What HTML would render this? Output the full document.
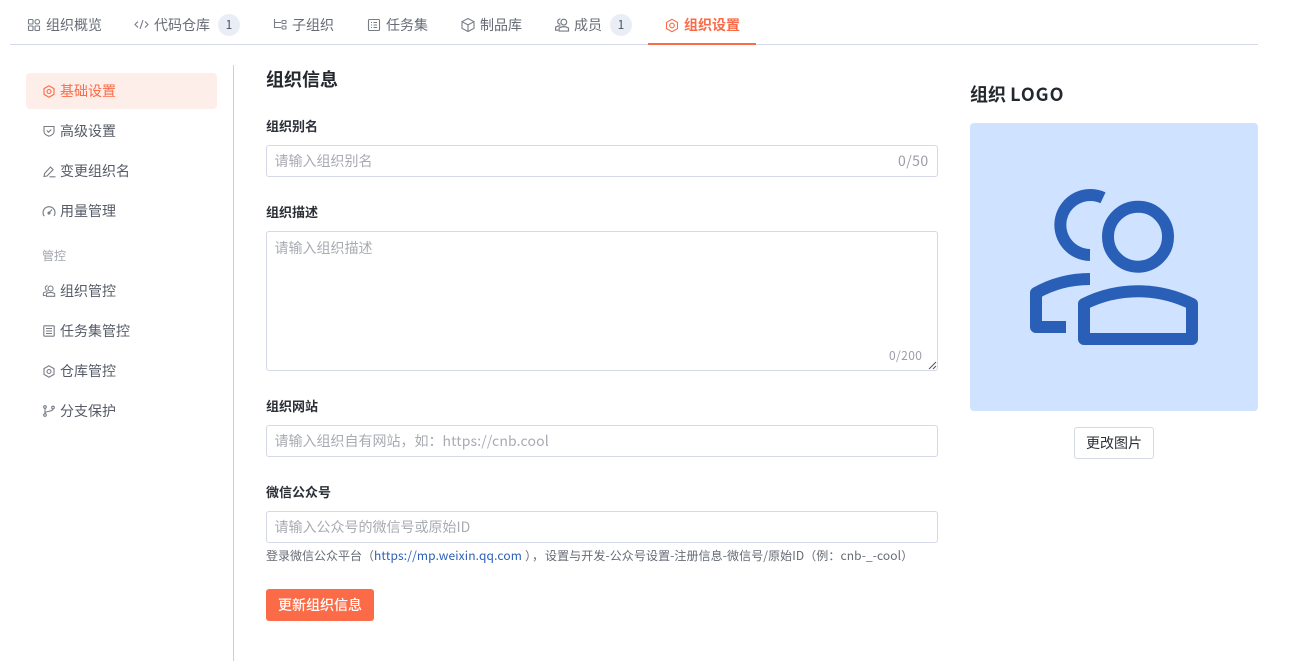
<!DOCTYPE html>
<html lang="zh-CN"><head><meta charset="utf-8"><title>组织设置</title>
<style>
html,body{margin:0;padding:0;background:#fff}
body{width:1293px;height:661px;position:relative;overflow:hidden;font-family:"Noto Sans CJK SC","Liberation Sans",sans-serif;font-size:14px;color:#555b66}
.t,.b,svg.i{position:absolute}
.t{white-space:nowrap;line-height:20px;height:20px}
.tab{color:#666b75}
.badge{position:absolute;width:22px;height:22px;border-radius:50%;background:#e9edf5;top:14px;text-align:center;line-height:22px;font-size:12px;color:#4b5563}
svg.i{fill:none;stroke:#777c85;stroke-width:1.1}
svg.o{stroke:#fb6b47}
.m{color:#555b66}
.lab{font-weight:700;font-size:13px;color:#2b2f36;left:266px}
.inp{left:266px;width:670px;border:1px solid #d5d9e6;border-radius:3px;background:#fff}
.ph{left:275px;color:#a8abb2}
</style></head><body>
<!-- tabs -->
<div class="b" style="left:10px;top:44px;width:1248px;height:1px;background:#d6dae8"></div>
<div class="b" style="left:648px;top:43px;width:108px;height:2px;background:#fb6b47"></div>

<svg class="i" style="left:27px;top:18px" width="14" height="14" viewBox="0 0 14 14"><rect x="1.5" y="1.5" width="4.5" height="4.5" rx=".7"/><rect x="8" y="1.5" width="4.5" height="4.5" rx="2.2"/><rect x="1.5" y="8" width="4.5" height="4.5" rx=".7"/><rect x="8" y="8" width="4.5" height="4.5" rx=".7"/></svg>
<span class="t tab" style="left:46px;top:15px">组织概览</span>

<svg class="i" style="left:134px;top:17px" width="15" height="15" viewBox="0 0 15 15"><path d="M4 4.5L1 7.5l3 3M11 4.5l3 3-3 3M9 3L6 12"/></svg>
<span class="t tab" style="left:154px;top:15px">代码仓库</span>
<span class="badge" style="left:218px">1</span>

<svg class="i" style="left:273px;top:17px" width="15" height="15" viewBox="0 0 15 15"><path d="M1.5 2v8.5H8M1.5 5.5H8"/><rect x="9" y="3.5" width="4" height="3" rx=".7"/><rect x="9" y="9" width="4" height="3" rx=".7"/></svg>
<span class="t tab" style="left:292px;top:15px">子组织</span>

<svg class="i" style="left:367px;top:18px" width="14" height="14" viewBox="0 0 14 14"><rect x="1.5" y="1.5" width="11" height="11" rx="1"/><path d="M4 4.5h1M6.5 4.5H10M4 7h1M6.5 7H10M4 9.5h1M6.5 9.5H10"/></svg>
<span class="t tab" style="left:386px;top:15px">任务集</span>

<svg class="i" style="left:460px;top:17px" width="16" height="16" viewBox="0 0 16 16"><path d="M8 1.5l6 3.2v6.6l-6 3.2-6-3.2V4.700zM2 4.700l6 3.200 6-3.200M8 7.900v6.600"/></svg>
<span class="t tab" style="left:480px;top:15px">制品库</span>

<svg class="i" style="left:554px;top:17px" width="16" height="16" viewBox="0 0 15 15"><path d="M6 1.800a2.500 2.500 0 0 0 0 5M6 8.200c-1.800 0-3.200.5-4.500 1.300v2.800H4"/><circle cx="9.200" cy="4.800" r="2.700"/><path d="M4.800 10.300c2.800-1.600 6-1.600 8.800 0v2.900H4.800z"/></svg>
<span class="t tab" style="left:574px;top:15px">成员</span>
<span class="badge" style="left:610px">1</span>

<svg class="i o" style="left:665px;top:18px" width="14" height="15" viewBox="0 0 14 15"><path d="M7 1.300l5.500 3.100v6.200L7 13.700l-5.500-3.100V4.400z"/><circle cx="7" cy="7.500" r="2.300"/></svg>
<span class="t" style="left:684px;top:15px;color:#fb6b47;font-weight:700">组织设置</span>

<!-- sidebar -->
<div class="b" style="left:233px;top:65px;width:1px;height:596px;background:#ccd0dc"></div>
<div class="b" style="left:26px;top:73px;width:191px;height:36px;background:#fdeee9;border-radius:4px"></div>

<svg class="i o" style="left:43px;top:85px" width="12" height="13" viewBox="0 0 12 13"><path d="M6 .8l5 2.800v5.800l-5 2.800-5-2.800V3.600z"/><circle cx="6" cy="6.500" r="2"/></svg>
<span class="t" style="left:60px;top:81px;color:#fb6b47">基础设置</span>

<svg class="i" style="left:43px;top:125px" width="12" height="12" viewBox="0 0 12 12"><path d="M1 1.500h10v5.200c0 2-2.500 3.600-5 4.500-2.500-.9-5-2.500-5-4.500z"/><path d="M3.800 5.500l1.700 1.700 2.800-2.700"/></svg>
<span class="t m" style="left:60px;top:121px">高级设置</span>

<svg class="i" style="left:43px;top:165px" width="13" height="13" viewBox="0 0 13 13"><path d="M1 11.500l.6-3L7.500 2l2.600 2.600L4 11zM6.500 11.800h6"/></svg>
<span class="t m" style="left:60px;top:161px">变更组织名</span>

<svg class="i" style="left:42px;top:205px" width="14" height="13" viewBox="0 0 14 13"><path d="M2.200 11.200A6 6 0 1 1 12 11M7 8l3-3.500"/><circle cx="7" cy="8" r="1" fill="#777c85"/></svg>
<span class="t m" style="left:60px;top:201px">用量管理</span>

<span class="t" style="left:42px;top:246px;font-size:12px;color:#a0a4ad">管控</span>

<svg class="i" style="left:42px;top:284px" width="14" height="14" viewBox="0 0 15 15"><path d="M6 1.800a2.500 2.500 0 0 0 0 5M6 8.200c-1.800 0-3.200.5-4.500 1.300v2.800H4"/><circle cx="9.200" cy="4.800" r="2.700"/><path d="M4.800 10.300c2.800-1.600 6-1.600 8.800 0v2.900H4.800z"/></svg>
<span class="t m" style="left:60px;top:281px">组织管控</span>

<svg class="i" style="left:43px;top:325px" width="12" height="12" viewBox="0 0 12 12"><rect x=".8" y=".8" width="10.400" height="10.400" rx=".8"/><path d="M3 3.500h6M3 6h6M3 8.500h6"/></svg>
<span class="t m" style="left:60px;top:321px">任务集管控</span>

<svg class="i" style="left:43px;top:365px" width="12" height="13" viewBox="0 0 12 13"><path d="M6 .8l5 2.800v5.800l-5 2.800-5-2.800V3.600z"/><circle cx="6" cy="6.500" r="2"/></svg>
<span class="t m" style="left:60px;top:361px">仓库管控</span>

<svg class="i" style="left:43px;top:405px" width="12" height="12" viewBox="0 0 12 12"><circle cx="2" cy="2" r="1.300"/><circle cx="2" cy="10" r="1.300"/><circle cx="10" cy="2.500" r="1.300"/><path d="M2 3.300v5.400M2 8c0-2 8-1 8-4.200"/></svg>
<span class="t m" style="left:60px;top:401px">分支保护</span>

<!-- main form -->
<span class="t" style="left:266px;top:69px;font-size:18px;font-weight:700;color:#23272e">组织信息</span>

<span class="t lab" style="top:116px">组织别名</span>
<div class="b inp" style="top:145px;height:30px"></div>
<span class="t ph" style="top:151px;left:274.5px">请输入组织别名</span>
<span class="t ph" style="left:898px;top:151px;color:#9a9da5;letter-spacing:.45px">0/50</span>

<span class="t lab" style="top:202px">组织描述</span>
<div class="b inp" style="top:231px;height:138px"></div>
<span class="t ph" style="top:238px;left:274.5px">请输入组织描述</span>
<span class="t" style="left:889px;top:346px;font-size:12px;color:#9a9da5;letter-spacing:.4px">0/200</span>
<svg class="i" style="left:928px;top:361px;stroke:#555;stroke-width:1" width="9" height="9" viewBox="0 0 9 9"><path d="M1 8l7-7M5 8l3-3"/></svg>

<span class="t lab" style="top:396px">组织网站</span>
<div class="b inp" style="top:425px;height:30px"></div>
<span class="t ph" style="top:431px;left:274.5px">请输入组织自有网站，如：<span style="letter-spacing:.15px">https://cnb.cool</span></span>

<span class="t lab" style="top:482px">微信公众号</span>
<div class="b inp" style="top:511px;height:30px"></div>
<span class="t ph" style="top:517px;left:274.5px">请输入公众号的微信号或原始ID</span>

<span class="t" style="left:266px;top:546px;font-size:12px;color:#666b75">登录微信公众平台（<span style="color:#2a5fb8;letter-spacing:.13px">https://mp.weixin.qq.com</span></span>
<span class="t" style="left:525px;top:546px;font-size:12px;color:#666b75">）</span>
<span class="t" style="left:532px;top:546px;font-size:12px;color:#666b75">，</span>
<span class="t" style="left:545px;top:546px;font-size:12px;color:#666b75;letter-spacing:.09px">设置与开发-公众号设置-注册信息-微信号/原始ID（例：cnb-_-cool）</span>

<div class="b" style="left:266px;top:589px;width:108px;height:32px;background:#fb6b47;border-radius:3px;color:#fff;text-align:center;line-height:32px;font-weight:500">更新组织信息</div>

<!-- logo -->
<span class="t" style="left:970px;top:84px;font-size:18px;font-weight:700;color:#23272e">组织 <span style="letter-spacing:1px">LOGO</span></span>
<div class="b" style="left:970px;top:123px;width:288px;height:288px;background:#cfe2ff;border-radius:4px"></div>
<svg class="b" style="left:970px;top:123px" width="288" height="288" viewBox="970 123 288 288" fill="none" stroke="#2a5fb8" stroke-width="12" stroke-linejoin="round">
<path d="M1090 255a30 30 0 1 1 13-57.200"/>
<circle cx="1138" cy="236.700" r="30"/>
<path d="M1090 279c-20 0-38 5-54 14v34h30"/>
<path d="M1084 339v-35c34-17 74-17 108 0v35z"/>
</svg>
<div class="b" style="left:1074px;top:427px;width:78px;height:30px;border:1px solid #d5d9e6;border-radius:3px;background:#fff;color:#2b2f36;text-align:center;line-height:30px">更改图片</div>
</body></html>
